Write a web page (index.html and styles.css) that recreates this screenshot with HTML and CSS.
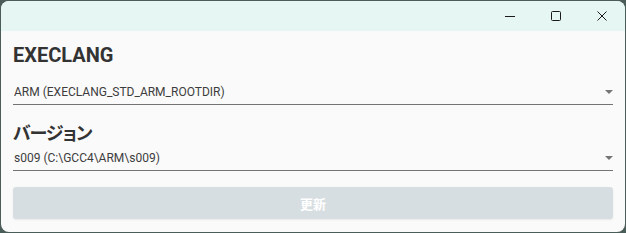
FILE: index.html
```html
<!DOCTYPE html>
<html>
<head>
<meta charset="utf-8">
<link rel="stylesheet" href="styles.css">
</head>
<body>
<div class="window">
  <div class="titlebar">
    <button class="winbtn" aria-label="minimize">
      <svg width="10" height="10" viewBox="0 0 10 10"><path d="M0 5.5H10" stroke="#1a1a1a" stroke-width="1"/></svg>
    </button>
    <button class="winbtn" aria-label="maximize">
      <svg width="10" height="10" viewBox="0 0 10 10"><rect x="0.5" y="0.5" width="9" height="9" rx="1" fill="none" stroke="#1a1a1a" stroke-width="1"/></svg>
    </button>
    <button class="winbtn" aria-label="close">
      <svg width="10" height="10" viewBox="0 0 10 10"><path d="M0.5 0.5L9.5 9.5M9.5 0.5L0.5 9.5" stroke="#1a1a1a" stroke-width="1"/></svg>
    </button>
  </div>
  <div class="content">
    <h2 class="label">EXECLANG</h2>
    <div class="select first">
      <span class="value">ARM (EXECLANG_STD_ARM_ROOTDIR)</span>
      <span class="arrow"></span>
    </div>
    <h2 class="label jp">バージョン</h2>
    <div class="select second">
      <span class="value">s009 (C:\GCC4\ARM\s009)</span>
      <span class="arrow"></span>
    </div>
    <button class="update">更新</button>
  </div>
</div>
</body>
</html>
```
FILE: styles.css
```css
html, body {
  margin: 0;
  padding: 0;
  width: 626px;
  height: 233px;
  background: #4b5d59;
  overflow: hidden;
}
.window {
  margin: 1px;
  width: 624px;
  height: 231px;
  background: #fafafa;
  border-radius: 8px;
  overflow: hidden;
  font-family: Roboto, "Noto Sans CJK JP", sans-serif;
  display: flex;
  flex-direction: column;
}
.titlebar {
  height: 30px;
  flex: none;
  background: #e6f7f3;
  display: flex;
  justify-content: flex-end;
  align-items: center;
}
.winbtn {
  width: 46px;
  height: 30px;
  border: 0;
  background: transparent;
  padding: 0;
  display: flex;
  align-items: center;
  justify-content: center;
}
.winbtn svg { display: block; }
.content {
  padding: 0 12px;
  display: flex;
  flex-direction: column;
}
.label {
  margin: 12px 0 0 0;
  font-size: 20px;
  font-weight: 700;
  color: #333333;
  line-height: 24px;
  height: 24px;
}
.label.jp {
  margin-top: 15px;
  font-size: 18px;
  letter-spacing: -1px;
  font-family: "Noto Sans CJK JP", sans-serif;
  font-feature-settings: "palt";
}
.select {
  display: flex;
  align-items: center;
  justify-content: space-between;
  height: 16px;
  padding-bottom: 4px;
  border-bottom: 1px solid #737373;
}
.select.first { margin-top: 17px; }
.select.second { margin-top: 6px; }
.select .value {
  font-size: 12px;
  line-height: 16px;
  color: #3d3d3d;
  padding-left: 1px;
}
.arrow {
  width: 0;
  height: 0;
  border-left: 4px solid transparent;
  border-right: 4px solid transparent;
  border-top: 4px solid #757575;
}
.update {
  margin-top: 16px;
  height: 32px;
  border: 0;
  border-radius: 3px;
  background: #d7dee1;
  color: #ffffff;
  font-family: "Noto Sans CJK JP", sans-serif;
  font-weight: 700;
  font-size: 13px;
  box-shadow: 0 1px 2px rgba(0,0,0,0.08);
}
```
